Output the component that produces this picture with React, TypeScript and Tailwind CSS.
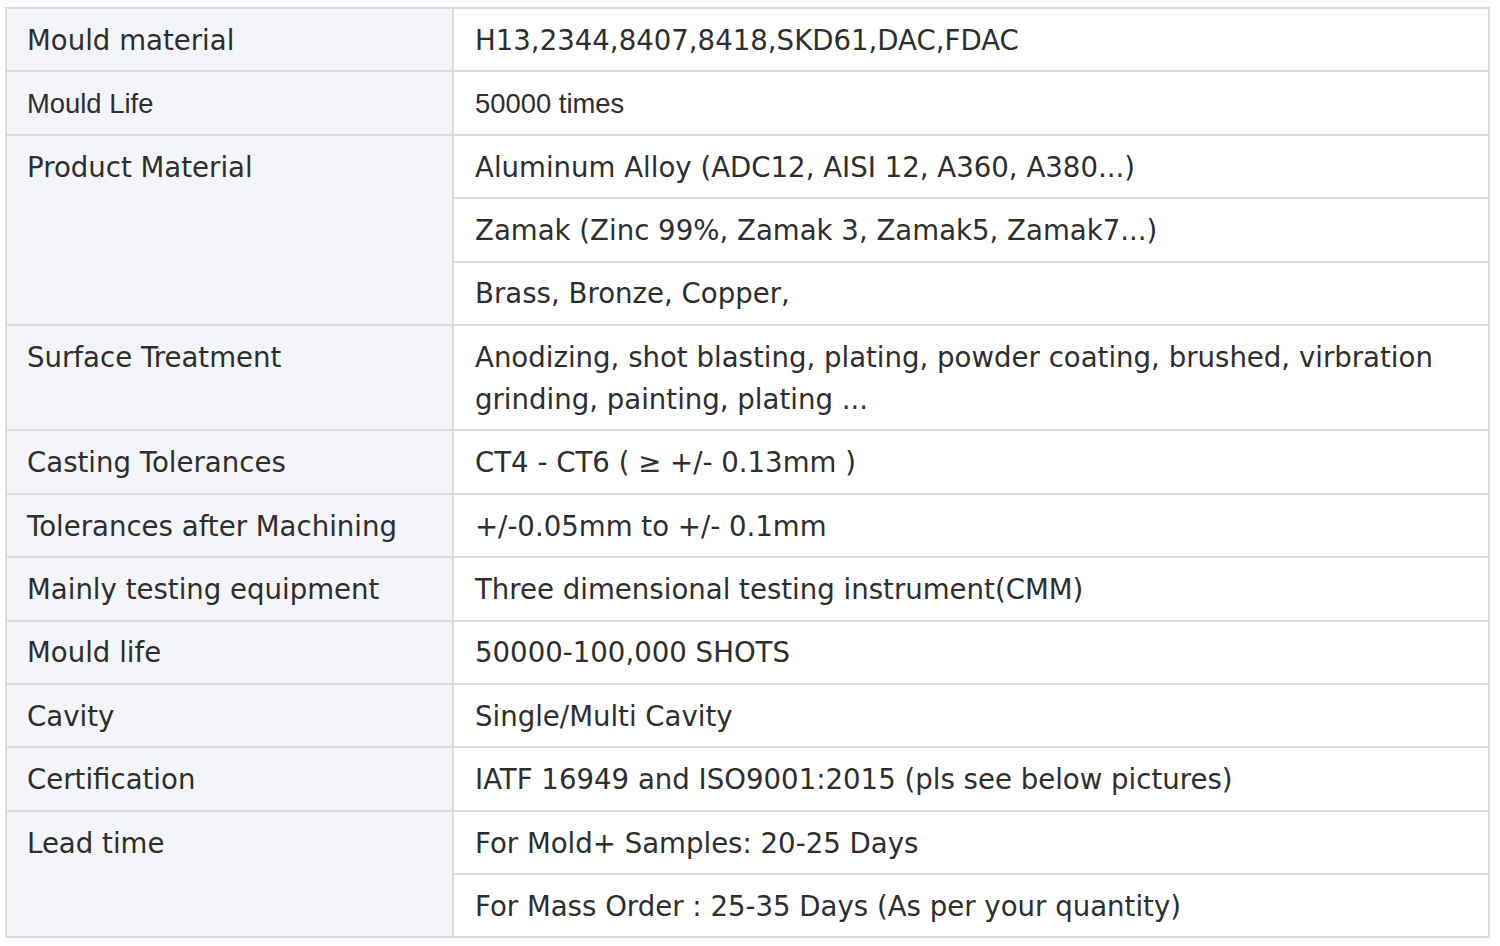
import React from "react";

type Row = { label?: string; span?: number; value: React.ReactNode; alt?: boolean };

const rows: Row[] = [
  { label: "Mould material", value: "H13,2344,8407,8418,SKD61,DAC,FDAC" },
  { label: "Mould Life", value: "50000 times", alt: true },
  { label: "Product Material", span: 3, value: "Aluminum Alloy (ADC12, AISI 12, A360, A380...)" },
  { value: "Zamak (Zinc 99%, Zamak 3, Zamak5, Zamak7...)" },
  { value: "Brass, Bronze, Copper," },
  {
    label: "Surface Treatment",
    value: "Anodizing, shot blasting, plating, powder coating, brushed, virbration grinding, painting, plating ...",
  },
  { label: "Casting Tolerances", value: "CT4 - CT6 ( ≥ +/- 0.13mm )" },
  { label: "Tolerances after Machining", value: "+/-0.05mm to +/- 0.1mm" },
  { label: "Mainly testing equipment", value: "Three dimensional testing instrument(CMM)" },
  { label: "Mould life", value: "50000-100,000 SHOTS" },
  { label: "Cavity", value: "Single/Multi Cavity" },
  { label: "Certification", value: "IATF 16949 and ISO9001:2015 (pls see below pictures)" },
  { label: "Lead time", span: 2, value: "For Mold+ Samples: 20-25 Days" },
  { value: "For Mass Order : 25-35 Days (As per your quantity)" },
];

export default function App() {
  return (
    <div className="w-[1500px] h-[946px] bg-white pt-[7px] pl-[5px]">
      <table
        className="border-collapse text-[#2e2e2e] text-[27.6px] leading-[42px]"
        style={{ fontFamily: '"DejaVu Sans", Verdana, sans-serif' }}
      >
        <colgroup>
          <col className="w-[447px]" />
          <col className="w-[1036px]" />
        </colgroup>
        <tbody>
          {rows.map((r, i) => (
            <tr key={i}>
              {r.label !== undefined && (
                <td
                  rowSpan={r.span ?? 1}
                  className={
                    "border-2 border-[#dcdcdc] bg-[#f4f5f8] align-top pl-[20px] pr-[20px] pt-[10.9px] pb-[8.5px] whitespace-nowrap " +
                    (r.alt ? "font-['Liberation_Sans',Arial,sans-serif] text-[27.4px]" : "")
                  }
                >
                  {r.label}
                </td>
              )}
              <td
                className={
                  "border-2 border-[#dcdcdc] bg-white align-top pl-[21px] pr-[20px] pt-[10.9px] pb-[8.5px] " +
                  (r.alt ? "font-['Liberation_Sans',Arial,sans-serif] text-[27.4px]" : "")
                }
              >
                {r.value}
              </td>
            </tr>
          ))}
        </tbody>
      </table>
    </div>
  );
}
